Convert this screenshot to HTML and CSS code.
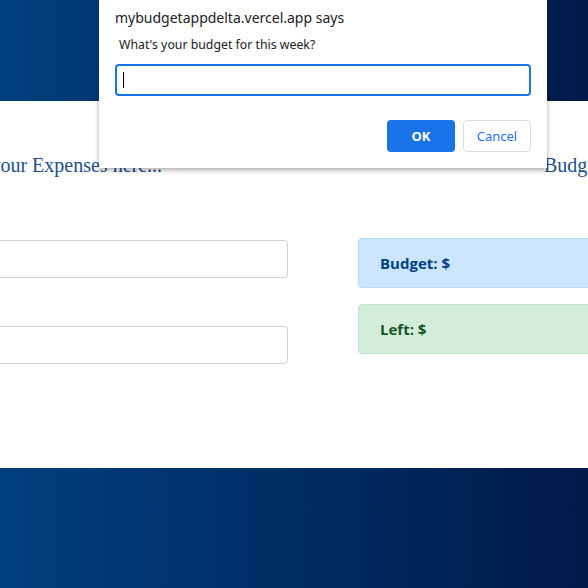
FILE: index.html
```html
<!DOCTYPE html>
<html>
<head>
<meta charset="utf-8">
<link rel="stylesheet" href="styles.css">
</head>
<body>
<header class="top-band"></header>
<main class="main">
  <div class="row">
    <section class="col-left">
      <h2 class="heading heading-left">Add your Expenses here...</h2>
      <input class="field field-first" type="text">
      <input class="field" type="text">
    </section>
    <section class="col-right">
      <h2 class="heading heading-right">Budget</h2>
      <div class="alert alert-blue">Budget: $</div>
      <div class="alert alert-green">Left: $</div>
    </section>
  </div>
</main>
<footer class="bottom-band"></footer>

<div class="dialog">
  <div class="dialog-title">mybudgetappdelta.vercel.app says</div>
  <div class="dialog-msg">What's your budget for this week?</div>
  <div class="dialog-input"><span class="caret"></span></div>
  <div class="dialog-buttons">
    <button class="btn btn-ok">OK</button>
    <button class="btn btn-cancel">Cancel</button>
  </div>
</div>
</body>
</html>
```
FILE: styles.css
```css
html, body {
  margin: 0;
  padding: 0;
  width: 588px;
  height: 588px;
  overflow: hidden;
  background: #fff;
}
.top-band {
  height: 101px;
  background: linear-gradient(to right, #003f7e, #001a4a);
}
.bottom-band {
  height: 120px;
  background: linear-gradient(to right, #003f7e, #001a4a);
}
.main {
  height: 367px;
  overflow: hidden;
}
.row {
  display: flex;
  margin-left: -212px;
  gap: 70px;
}
.col-left {
  flex: 0 0 500px;
  display: flex;
  flex-direction: column;
}
.col-right {
  flex: 0 0 400px;
  display: flex;
  flex-direction: column;
}
.heading {
  margin: 52px 0 0 0;
  font-family: "Liberation Serif", "DejaVu Serif", serif;
  font-weight: normal;
  font-size: 20px;
  line-height: 24px;
  color: #1d4f8c;
  white-space: nowrap;
}
.heading-left {
  padding-left: 163px;
}
.heading-right {
  padding-left: 186px;
}
.field {
  box-sizing: border-box;
  height: 38px;
  margin-top: 63px;
  border: 1px solid #ced1d8;
  border-radius: 4px;
  background: #fff;
}
.field + .field {
  margin-top: 48px;
}
.alert {
  box-sizing: border-box;
  height: 50px;
  border-radius: 4px;
  padding: 0 21px;
  display: flex;
  align-items: center;
  font-family: "Open Sans", "Noto Sans", sans-serif;
  font-weight: bold;
  font-size: 15px;
}
.alert-blue {
  margin-top: 61px;
  background: #cce5ff;
  border: 1px solid #b8daff;
  color: #004085;
}
.alert-green {
  margin-top: 16px;
  background: #d4edda;
  border: 1px solid #c3e6cb;
  color: #155724;
}
.dialog {
  position: absolute;
  left: 99px;
  top: 0;
  width: 448px;
  height: 168px;
  box-sizing: border-box;
  background: #fff;
  box-shadow: 0 2px 5px rgba(0, 0, 0, 0.35);
  padding: 7px 16px 0 16px;
  font-family: "Noto Sans", "Open Sans", sans-serif;
  color: #202124;
}
.dialog-title {
  font-size: 14px;
  line-height: 22px;
}
.dialog-msg {
  font-size: 12.3px;
  line-height: 18px;
  margin-top: 7px;
  padding-left: 4px;
}
.dialog-input {
  box-sizing: border-box;
  margin-top: 10px;
  height: 32px;
  border: 2px solid #1a73e8;
  border-radius: 4px;
  padding: 6px 0 0 6px;
}
.caret {
  display: block;
  width: 1px;
  height: 16px;
  background: #000;
}
.dialog-buttons {
  display: flex;
  justify-content: flex-end;
  gap: 8px;
  margin-top: 24px;
}
.btn {
  box-sizing: border-box;
  width: 68px;
  height: 32px;
  border-radius: 4px;
  font-family: "Noto Sans", "Open Sans", sans-serif;
  font-size: 13px;
  cursor: pointer;
}
.btn-ok {
  background: #1a73e8;
  border: none;
  color: #fff;
  font-weight: bold;
}
.btn-cancel {
  background: #fff;
  border: 1px solid #dadce0;
  color: #1a73e8;
}
```
